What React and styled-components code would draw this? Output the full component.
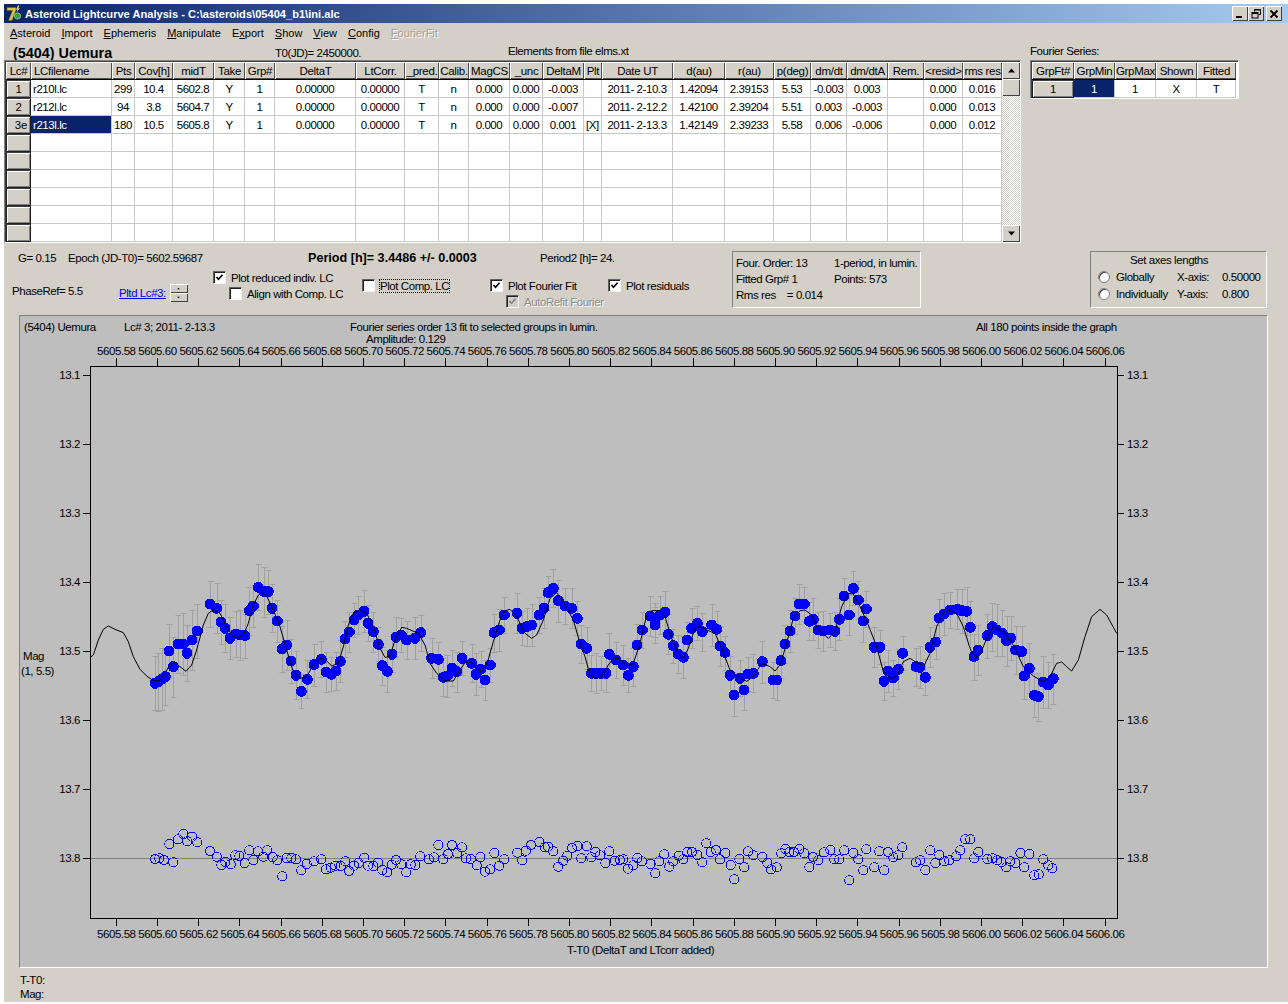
import styled, { createGlobalStyle } from "styled-components"

const FONT = `"Liberation Sans", Arial, sans-serif`
const TEXT_SIZE = 11.5
const TEXT_SPACING = -0.43

const GlobalStyle = createGlobalStyle`
    html, body {
        margin: 0;
        padding: 0;
        background: #fff;
    }
    body {
        font-family: ${FONT};
        font-size: ${TEXT_SIZE}px;
        letter-spacing: ${TEXT_SPACING}px;
        color: #000;
    }
`

const Window = styled.div`
    width: 1284px;
    height: 998px;
    margin: 4px 0 0 4px;
    background: #d4d0c8;
    display: flex;
    flex-direction: column;
    overflow: hidden;
`

const TitleBar = styled.div`
    height: 19px;
    flex: none;
    display: flex;
    align-items: center;
    padding: 0 6px 0 2px;
    gap: 3px;
    background: linear-gradient(90deg, #0a246a, #a6caf0);
    color: #fff;
    font-weight: bold;
    font-size: 11.1px;
    letter-spacing: 0;
`

const TitleText = styled.span`
    flex: 1;
`

const CaptionButtons = styled.div`
    display: flex;
`

const CaptionButton = styled.div`
    width: 16px;
    height: 15px;
    margin-left: ${p => p.$gap || 0}px;
    background: #d4d0c8;
    box-shadow: inset 1px 1px #fff, inset -1px -1px #404040;
    display: flex;
    align-items: center;
    justify-content: center;
`

const MenuBar = styled.div`
    height: 20px;
    flex: none;
    display: flex;
    align-items: center;
    padding-left: 6px;
    box-sizing: border-box;
    gap: 11px;
    font-size: 11px;
    letter-spacing: 0;
`

const MenuItem = styled.span`
    color: ${p => (p.$off ? "#a09d96" : "#000")};
    text-shadow: ${p => (p.$off ? "1px 1px #fff" : "none")};
    u {
        text-decoration: underline;
    }
`

const InfoRow = styled.div`
    height: 19px;
    flex: none;
    display: flex;
    align-items: center;
    padding-left: 9px;
`

const InfoCell = styled.div`
    width: ${p => p.$w}px;
    flex: none;
    font-size: ${p => p.$size || TEXT_SIZE}px;
    font-weight: ${p => (p.$bold ? "bold" : "normal")};
    letter-spacing: ${p => (p.$bold ? 0 : TEXT_SPACING)}px;
    padding-bottom: ${p => p.$lift || 0}px;
`

const TopSection = styled.div`
    flex: none;
    display: flex;
    height: 183px;
    margin-top: -2px;
`

const GridFrame = styled.div`
    width: 1017px;
    height: 183px;
    flex: none;
    display: flex;
    background: #fff;
    border: 1px solid;
    border-color: #808080 #fff #fff #808080;
    box-sizing: border-box;
    box-shadow: inset 1px 1px #404040;
    padding: 1px 0 0 1px;
`

const Table = styled.div`
    display: grid;
    grid-template-columns: ${p => p.$cols};
    grid-auto-rows: 18px;
    align-content: start;
`

const HeadCell = styled.div`
    background: #d4d0c8;
    box-sizing: border-box;
    border-bottom: 1px solid #000;
    box-shadow: inset 1px 1px #fff, inset -1px -1px #505050;
    display: flex;
    align-items: center;
    justify-content: ${p => (p.$left ? "flex-start" : "center")};
    padding-left: ${p => (p.$left ? 3 : 0)}px;
    white-space: nowrap;
    overflow: hidden;
    letter-spacing: -0.3px;
`

const Cell = styled.div`
    background: ${p => (p.$selected ? "#0a246a" : "#fff")};
    color: ${p => (p.$selected ? "#fff" : "#000")};
    border-right: 1px solid #c8c8c8;
    border-bottom: 1px solid #c8c8c8;
    box-sizing: border-box;
    display: flex;
    align-items: center;
    justify-content: ${p => (p.$left ? "flex-start" : "center")};
    padding-left: ${p => (p.$left ? 2 : 0)}px;
    white-space: nowrap;
    overflow: hidden;
`

const RowHead = styled(HeadCell)`
    justify-content: ${p => (p.$right ? "flex-end" : "center")};
    padding-right: ${p => (p.$right ? 3 : 0)}px;
    border: 1px solid #202020;
    border-top-color: #404040;
    box-shadow: inset 1px 1px #fff, inset -1px -1px #808080;
`

const ScrollBar = styled.div`
    width: 18px;
    flex: none;
    display: flex;
    flex-direction: column;
    background: repeating-conic-gradient(#fff 0 25%, #d4d0c8 0 50%) 0 0 / 2px 2px;
`

const ScrollArrow = styled.div`
    width: 18px;
    height: 17px;
    background: #d4d0c8;
    box-shadow: inset 1px 1px #fff, inset -1px -1px #404040;
    display: flex;
    align-items: center;
    justify-content: center;
    margin-top: ${p => (p.$push ? "auto" : 0)};
`

const ScrollThumb = styled(ScrollArrow)`
    height: 17px;
`

const FourierSide = styled.div`
    margin-left: 9px;
    margin-top: -15px;
`

const FourierCaption = styled.div`
    height: 15px;
`

const FourierFrame = styled.div`
    width: 206px;
    border: 1px solid;
    border-color: #808080 #fff #fff #808080;
    background: #fff;
    padding: 1px 0 0 1px;
    box-shadow: inset 1px 1px #404040;
`

const ControlBand = styled.div`
    height: 72px;
    flex: none;
    display: flex;
    padding-top: 8px;
    box-sizing: border-box;
`

const ControlMain = styled.div`
    width: 728px;
    flex: none;
    display: flex;
    flex-direction: column;
`

const PeriodRow = styled.div`
    display: flex;
    height: 14px;
    padding-left: 14px;
    align-items: center;
`

const Label = styled.div`
    width: ${p => (p.$w ? p.$w + "px" : "auto")};
    flex: none;
    font-size: ${p => p.$size || TEXT_SIZE}px;
    font-weight: ${p => (p.$bold ? "bold" : "normal")};
    letter-spacing: ${p => (p.$bold ? 0 : TEXT_SPACING)}px;
    white-space: nowrap;
`

const OptionsRow = styled.div`
    display: flex;
    margin-top: 6px;
`

const OptionColumn = styled.div`
    width: ${p => p.$w}px;
    flex: none;
    display: flex;
    flex-direction: column;
    gap: ${p => p.$gap ?? 3}px;
    padding-top: ${p => p.$top || 0}px;
    padding-left: ${p => p.$left || 0}px;
    box-sizing: border-box;
`

const Check = styled.label`
    display: flex;
    align-items: center;
    gap: 5px;
    height: 13px;
    margin-left: ${p => p.$indent || 0}px;
    color: ${p => (p.$dim ? "#8c8a84" : "#000")};
    text-shadow: ${p => (p.$dim ? "1px 1px #fff" : "none")};
    white-space: nowrap;
`

const Box = styled.span`
    width: 13px;
    height: 13px;
    box-sizing: border-box;
    flex: none;
    background: ${p => (p.$dim ? "#d4d0c8" : "#fff")};
    border: 1px solid;
    border-color: #606060 #f4f4f4 #f4f4f4 #606060;
    box-shadow: inset 1px 1px #202020;
    display: flex;
    align-items: center;
    justify-content: center;
`

const Focused = styled.span`
    outline: 1px dotted #000;
`

const SpinRow = styled.div`
    display: flex;
    align-items: center;
`

const LcLink = styled.span`
    color: #0000ee;
    text-decoration: underline;
    margin-right: 4px;
`

const Spinner = styled.div`
    display: flex;
    flex-direction: column;
    width: 18px;
`

const SpinButton = styled.div`
    height: 9px;
    background: #d4d0c8;
    box-shadow: inset 1px 1px #fff, inset -1px -1px #404040;
    display: flex;
    align-items: center;
    justify-content: center;
`

const GroupBox = styled.div`
    width: ${p => p.$w}px;
    height: 57px;
    flex: none;
    margin-left: ${p => p.$gap}px;
    box-sizing: border-box;
    border: 1px solid;
    border-color: #808080 #fff #fff #808080;
    padding: ${p => p.$pad};
    display: grid;
    grid-template-columns: ${p => p.$cols};
    grid-template-rows: ${p => p.$rows};
    align-items: center;
    white-space: nowrap;
`

const BoxTitle = styled.div`
    grid-column: 1 / -1;
    padding-left: 32px;
    margin-top: -1px;
`

const Radio = styled.span`
    width: 12px;
    height: 12px;
    box-sizing: border-box;
    display: inline-block;
    border-radius: 50%;
    background: #fff;
    border: 1px solid #808080;
    box-shadow: inset 1px 1px #404040;
    margin-right: 6px;
    vertical-align: -2px;
`

const PlotPanel = styled.div`
    width: 1249px;
    height: 653px;
    flex: none;
    margin-left: 15px;
    box-sizing: border-box;
    background: #bebebe;
    border: 1px solid;
    border-color: #808080 #fff #fff #808080;
`

const StatusArea = styled.div`
    flex: 1;
    padding: 5px 0 0 16px;
    line-height: 14px;
`

const colDefs = [
    ["Lc#", 25], ["LCfilename", 81], ["Pts", 23], ["Cov[h]", 38], ["midT", 41], ["Take", 31], ["Grp#", 30],
    ["DeltaT", 81], ["LtCorr.", 49], ["_pred.", 34], ["Calib.", 30], ["MagCS", 41], ["_unc", 33], ["DeltaM", 41],
    ["Plt", 18], ["Date UT", 71], ["d(au)", 52], ["r(au)", 49], ["p(deg)", 37], ["dm/dt", 36], ["dm/dtA", 41],
    ["Rem.", 36], ["<resid>", 39], ["rms res", 39],
]

const rows = [
    ["1", "r210l.lc", "299", "10.4", "5602.8", "Y", "1", "0.00000", "0.00000", "T", "n", "0.000", "0.000", "-0.003", "", "2011- 2-10.3", "1.42094", "2.39153", "5.53", "-0.003", "0.003", "", "0.000", "0.016"],
    ["2", "r212l.lc", "94", "3.8", "5604.7", "Y", "1", "0.00000", "0.00000", "T", "n", "0.000", "0.000", "-0.007", "", "2011- 2-12.2", "1.42100", "2.39204", "5.51", "0.003", "-0.003", "", "0.000", "0.013"],
    ["3e", "r213l.lc", "180", "10.5", "5605.8", "Y", "1", "0.00000", "0.00000", "T", "n", "0.000", "0.000", "0.001", "[X]", "2011- 2-13.3", "1.42149", "2.39233", "5.58", "0.006", "-0.006", "", "0.000", "0.012"],
]
const emptyRows = Array.from({ length: 6 })

// pixel samples read off the reference, [x, y] in screen coordinates
const zoomed = (ox, oy, list) => list.map(([x, y]) => [ox + x / 3, oy + y / 3])

const curve = [
    ...zoomed(90, 570, [[0,263],[10,255],[25,210],[40,178],[55,168],[75,178],[100,188],[115,215],[130,260],[150,298],[170,318],[190,332],[210,332],[225,310],[240,283],[255,277],[270,290],[288,304],[305,285],[320,240],[340,165],[355,130],[372,118],[390,130],[410,170],[425,195],[445,205],[460,195],[475,160],[490,105],[505,75],[515,68],[530,78],[550,120],[570,170],[590,240],[610,305],[630,326],[650,320],[670,285],[690,265],[705,268],[725,288],[745,280],[760,230],[775,165],[790,130],[810,120],[830,130],[850,170],[870,235],[885,262],[900,260],[915,210],[935,172],[950,175],[985,190],[1005,225]]),
    ...zoomed(430, 570, [[0,280],[20,310],[45,333],[70,333],[90,300],[105,278],[125,277],[150,303],[170,285],[190,215],[210,150],[225,122],[240,118],[260,140],[285,190],[305,205],[320,195],[340,150],[360,85],[380,68],[400,95],[430,150],[450,220],[465,260],[480,315],[495,325],[515,320],[535,285],[550,265],[565,265],[590,287],[610,280],[630,220],[650,135],[665,122],[690,122],[705,140],[725,205],[745,250],[760,265],[775,235],[795,175],[810,170],[830,180],[855,190],[875,235],[900,300],[925,320],[950,334],[970,320],[995,280]]),
    ...zoomed(770, 570, [[0,290],[15,303],[30,285],[50,220],[70,145],[90,122],[105,120],[125,135],[145,180],[175,205],[195,185],[215,110],[235,70],[250,72],[270,110],[295,165],[320,230],[340,305],[360,325],[380,318],[400,275],[420,265],[440,278],[462,287],[480,250],[500,170],[520,130],[540,120],[560,130],[580,170],[600,235],[615,263],[630,255],[650,205],[670,170],[700,185],[730,225],[760,290],[790,318],[820,335],[840,320],[860,280],[875,276],[890,290],[905,303],[925,270],[945,200],[965,140],[990,118],[1010,135],[1040,190]]),
]

const points = [
    ...zoomed(90, 570, [[195,340],[205,335],[215,328],[226,320],[250,290],[237,243],[264,222],[280,222],[291,250],[306,210],[322,183],[360,102],[380,115],[393,156],[405,175],[420,205],[437,192],[450,195],[465,197],[478,122],[490,108],[505,52],[522,65],[535,65],[546,115],[562,153],[576,237],[590,225],[603,273],[618,316],[634,364],[652,328],[672,284],[694,268],[708,306],[724,313],[738,303],[751,274],[765,207],[778,186],[792,150],[805,135],[822,124],[834,160],[850,185],[865,223],[877,287],[892,304],[906,253],[918,202],[934,195],[950,210],[975,205],[992,188]]),
    ...zoomed(430, 570, [[5,265],[25,268],[40,322],[52,318],[66,295],[80,305],[96,265],[125,280],[138,313],[152,298],[165,330],[181,285],[192,188],[208,180],[223,135],[261,130],[276,175],[290,170],[305,165],[327,135],[342,115],[354,68],[370,55],[385,92],[405,108],[425,115],[442,145],[454,222],[470,235],[484,310],[498,310],[513,310],[528,310],[538,253],[558,270],[580,285],[595,316],[610,290],[621,225],[637,180],[660,138],[675,150],[690,135],[705,127],[675,165],[715,193],[730,227],[745,252],[760,262],[772,210],[785,175],[802,160],[817,185],[845,165],[860,178],[871,228],[885,248],[900,316],[912,375],[930,325],[942,360],[955,312],[970,310],[997,275]]),
    ...zoomed(770, 570, [[10,330],[20,330],[33,272],[45,222],[60,183],[75,138],[88,102],[103,102],[118,154],[130,148],[145,180],[160,183],[180,180],[195,184],[208,148],[222,78],[238,135],[250,55],[265,90],[280,153],[289,117],[312,232],[330,232],[342,334],[355,303],[370,324],[385,298],[398,250],[438,290],[450,292],[466,322],[480,232],[497,216],[507,144],[522,132],[540,120],[562,118],[575,122],[590,124],[601,172],[612,260],[624,240],[652,197],[667,170],[680,180],[697,190],[710,212],[722,204],[737,240],[755,245],[763,318],[778,295],[793,376],[805,380],[820,336],[835,345],[850,326]]),
]

const residuals = [
    ...zoomed(130, 820, [[75,117],[88,115],[102,120],[130,127],[118,72],[144,58],[160,42],[172,64],[186,50],[202,67],[240,93],[260,110],[274,135],[286,126],[302,133],[316,106],[328,108],[344,129],[358,91],[370,120],[384,94],[400,110],[412,91],[428,111],[442,121],[457,169],[470,114],[484,114],[498,118],[514,151],[530,132],[552,124],[574,118],[588,148],[602,143],[616,137],[632,138],[646,124],[657,153],[672,137],[686,129],[703,113],[714,137],[730,138],[744,128],[757,150],[772,157],[785,134],[798,120],[814,133],[829,157],[842,133],[856,135],[871,109],[897,118],[912,112],[925,75],[940,118],[954,102],[966,75],[982,100],[996,82],[1008,115],[1022,117],[1040,136],[1051,111],[1065,155],[1080,148],[1093,99],[1108,137],[1123,118],[1162,98],[1177,121],[1188,92],[1203,75],[1228,66],[1244,82],[1254,80],[1270,94],[1285,140],[1300,122],[1312,107],[1326,84],[1342,78],[1354,115],[1370,79],[1384,112],[1396,96],[1410,106],[1426,129],[1438,94],[1454,122],[1470,120]]),
    ...zoomed(620, 820, [[10,118],[24,146],[40,136],[52,114],[66,124],[91,132],[106,160],[118,124],[133,103],[148,140],[160,124],[176,107],[190,118],[202,96],[216,96],[232,105],[247,127],[259,70],[272,96],[288,90],[300,118],[316,99],[332,135],[343,178],[358,117],[373,142],[384,94],[400,106],[427,111],[442,129],[453,148],[470,142],[484,100],[496,87],[508,96],[522,96],[538,87],[553,100],[568,141],[579,111],[595,121],[612,97],[631,90],[643,118],[658,118],[673,91],[688,181],[700,99],[715,118],[730,151],[739,88],[763,142],[778,94],[793,151],[804,96],[820,112],[835,106],[847,82],[888,127],[901,121],[916,150],[931,91],[946,129],[958,105],[973,124],[988,121],[1009,109],[1021,91],[1036,58],[1051,58],[1063,115],[1075,96],[1102,117],[1117,115],[1132,121],[1144,126],[1159,142],[1171,124],[1186,129],[1201,99],[1213,142],[1228,102],[1243,166],[1256,163],[1270,118],[1285,136],[1297,145]]),
]

function errorSize(x, i) {
    const base = x < 200 ? 29 : x < 300 ? 23 : x < 960 ? 19 : 24
    return base + ((i * 7) % 5) - 2
}

const xLabels = Array.from({ length: 25 }, (_, i) => (5605.58 + i * 0.02).toFixed(2))
const xTick = i => 116.3 + i * 41.2
const yLabels = ["13.1", "13.2", "13.3", "13.4", "13.5", "13.6", "13.7", "13.8"]
const yTick = i => 375 + i * 69

// the plot is drawn in screen coordinates, the svg origin sits at the panel's inner corner
const PX = 20
const PY = 316

function Chart() {
    const txt = { fontFamily: FONT, fontSize: TEXT_SIZE, fill: "#000" }
    return (
        <svg width="1247" height="651" viewBox={`${PX} ${PY} 1247 651`} style={{ display: "block" }}>
            <rect x="90.5" y="366.5" width="1027" height="552" fill="none" stroke="#000" />
            <line x1="91" x2="1117" y1="858.5" y2="858.5" stroke="#808080" />
            {xLabels.map((l, i) => (
                <g key={l}>
                    <line x1={xTick(i)} x2={xTick(i)} y1="358" y2="366" stroke="#000" shapeRendering="crispEdges" />
                    <line x1={xTick(i)} x2={xTick(i)} y1="918" y2="926" stroke="#000" shapeRendering="crispEdges" />
                    <text {...txt} x={xTick(i)} y="355" textAnchor="middle">{l}</text>
                    <text {...txt} x={xTick(i)} y="938" textAnchor="middle">{l}</text>
                </g>
            ))}
            {yLabels.map((l, i) => (
                <g key={l}>
                    <line x1="83" x2="90" y1={yTick(i) + 0.5} y2={yTick(i) + 0.5} stroke="#000" />
                    <line x1="1117" x2="1124" y1={yTick(i) + 0.5} y2={yTick(i) + 0.5} stroke="#000" />
                    <text {...txt} x="80" y={yTick(i) + 4} textAnchor="end">{l}</text>
                    <text {...txt} x="1127" y={yTick(i) + 4}>{l}</text>
                </g>
            ))}
            {points.map(([x, y], i) => {
                const e = errorSize(x, i)
                const cx = Math.round(x) + 0.5
                return (
                    <path
                        key={"e" + i}
                        d={`M${cx} ${Math.round(y - e)}V${Math.round(y + e)}M${cx - 3} ${Math.round(y - e) + 0.5}h6M${cx - 3} ${Math.round(y + e) + 0.5}h6`}
                        stroke="#a0a0a0"
                        fill="none"
                    />
                )
            })}
            {points.map(([x, y], i) => (
                <circle key={"p" + i} cx={x} cy={y} r="5.5" fill="#0000ff" shapeRendering="crispEdges" />
            ))}
            <polyline points={curve.map(p => p.join(",")).join(" ")} fill="none" stroke="#000" strokeWidth="1" />
            {residuals.map(([x, y], i) => (
                <circle key={"r" + i} cx={x} cy={y} r="4.6" fill="none" stroke="#0000ff" strokeWidth="1" shapeRendering="crispEdges" />
            ))}
            <text {...txt} x="24" y="331">(5404) Uemura</text>
            <text {...txt} x="124" y="331">Lc# 3; 2011- 2-13.3</text>
            <text {...txt} x="350" y="331">Fourier series order 13 fit to selected groups in lumin.</text>
            <text {...txt} x="366" y="343">Amplitude: 0.129</text>
            <text {...txt} x="976" y="331">All 180 points inside the graph</text>
            <text {...txt} x="23" y="660">Mag</text>
            <text {...txt} x="21" y="675">(1, 5.5)</text>
            <text {...txt} x="567" y="954">T-T0 (DeltaT and LTcorr added)</text>
        </svg>
    )
}

function AppLogo() {
    return (
        <svg width="16" height="17" viewBox="0 0 16 16">
            <rect width="16" height="16" fill="#0a246a" />
            <path d="M1 2h9v2.5L6 15H2.5L6.5 5H1z" fill="#d8c84a" stroke="#6b5a10" strokeWidth="0.6" />
            <path d="M12 0l1.5 0-1.5 3 2-.5L10.5 7l1-3-1.5.3z" fill="#f6ea3c" />
            <circle cx="11.5" cy="10.5" r="3.2" fill="#3c9a5a" stroke="#c8e0d0" strokeWidth="0.5" />
        </svg>
    )
}

const CheckMark = ({ color = "#000" }) => (
    <svg width="9" height="9" viewBox="0 0 9 9">
        <path d="M1.5 4l2 2.2L7.5 1.8" fill="none" stroke={color} strokeWidth="1.7" />
    </svg>
)

const Triangle = ({ up, size = 7 }) => (
    <svg width={size} height={Math.ceil(size / 2) + 1} viewBox="0 0 7 4">
        <path d={up ? "M3.5 0L7 4H0z" : "M0 0h7L3.5 4z"} fill="#000" />
    </svg>
)

export default function App() {
    const cols = colDefs.map(c => c[1] + "px").join(" ")
    return (
        <>
            <GlobalStyle />
            <Window>
                <TitleBar>
                    <AppLogo />
                    <TitleText>Asteroid Lightcurve Analysis - C:\asteroids\05404_b1\ini.alc</TitleText>
                    <CaptionButtons>
                        <CaptionButton>
                            <svg width="10" height="10"><rect x="1" y="7" width="6" height="2" fill="#000" /></svg>
                        </CaptionButton>
                        <CaptionButton>
                            <svg width="10" height="10" fill="none" stroke="#000">
                                <path d="M3.5 2.5V.5h6v5h-2" />
                                <path d="M3 1h6" strokeWidth="1" />
                                <rect x="1" y="3.5" width="6" height="5.5" />
                                <path d="M1 4.5h6" />
                            </svg>
                        </CaptionButton>
                        <CaptionButton $gap={2}>
                            <svg width="10" height="10" stroke="#000" strokeWidth="1.8">
                                <path d="M1.5 1.5l7 7M8.5 1.5l-7 7" />
                            </svg>
                        </CaptionButton>
                    </CaptionButtons>
                </TitleBar>
                <MenuBar>
                    <MenuItem><u>A</u>steroid</MenuItem>
                    <MenuItem><u>I</u>mport</MenuItem>
                    <MenuItem><u>E</u>phemeris</MenuItem>
                    <MenuItem><u>M</u>anipulate</MenuItem>
                    <MenuItem>E<u>x</u>port</MenuItem>
                    <MenuItem><u>S</u>how</MenuItem>
                    <MenuItem><u>V</u>iew</MenuItem>
                    <MenuItem><u>C</u>onfig</MenuItem>
                    <MenuItem $off><u>F</u>ourierFit</MenuItem>
                </MenuBar>
                <InfoRow>
                    <InfoCell $w={262} $size={14.4} $bold>(5404) Uemura</InfoCell>
                    <InfoCell $w={233}>T0(JD)= 2450000.</InfoCell>
                    <InfoCell $w={200} $lift={3}>Elements from file elms.xt</InfoCell>
                </InfoRow>
                <TopSection>
                    <GridFrame>
                        <Table $cols={cols}>
                            {colDefs.map(([name], i) => (
                                <HeadCell key={name} $left={i === 1}>{name}</HeadCell>
                            ))}
                            {rows.map(row => row.map((value, i) => (
                                i === 0
                                    ? <RowHead key={i} as="div" $right={value === "3e"}>{value}</RowHead>
                                    : <Cell key={row[0] + i} $left={i === 1} $selected={i === 1 && row[0] === "3e"}>{value}</Cell>
                            )))}
                            {emptyRows.map((_, r) => colDefs.map((c, i) => (
                                i === 0
                                    ? <RowHead key={"h" + r} />
                                    : <Cell key={r + "-" + i} />
                            )))}
                        </Table>
                        <ScrollBar>
                            <ScrollArrow><Triangle up /></ScrollArrow>
                            <ScrollThumb />
                            <ScrollArrow $push><Triangle /></ScrollArrow>
                        </ScrollBar>
                    </GridFrame>
                    <FourierSide>
                        <FourierCaption>Fourier Series:</FourierCaption>
                        <FourierFrame>
                            <Table $cols="42px 41px 41px 41px 39px">
                                {["GrpFt#", "GrpMin", "GrpMax", "Shown", "Fitted"].map(h => (
                                    <HeadCell key={h}>{h}</HeadCell>
                                ))}
                                <RowHead>1</RowHead>
                                <Cell $selected>1</Cell>
                                <Cell>1</Cell>
                                <Cell>X</Cell>
                                <Cell>T</Cell>
                            </Table>
                        </FourierFrame>
                    </FourierSide>
                </TopSection>
                <ControlBand>
                    <ControlMain>
                        <PeriodRow>
                            <Label $w={50}>G= 0.15</Label>
                            <Label $w={240}>Epoch (JD-T0)= 5602.59687</Label>
                            <Label $w={232} $size={12.6} $bold>Period [h]= 3.4486 +/- 0.0003</Label>
                            <Label>Period2 [h]= 24.</Label>
                        </PeriodRow>
                        <OptionsRow>
                            <OptionColumn $w={115} $left={8} $top={14}>
                                <Label>PhaseRef= 5.5</Label>
                            </OptionColumn>
                            <OptionColumn $w={94} $top={13}>
                                <SpinRow>
                                    <LcLink>Pltd Lc#3:</LcLink>
                                    <Spinner>
                                        <SpinButton><Triangle up size={3} /></SpinButton>
                                        <SpinButton><Triangle size={3} /></SpinButton>
                                    </Spinner>
                                </SpinRow>
                            </OptionColumn>
                            <OptionColumn $w={149}>
                                <Check><Box><CheckMark /></Box>Plot reduced indiv. LC</Check>
                                <Check $indent={16}><Box />Align with Comp. LC</Check>
                            </OptionColumn>
                            <OptionColumn $w={128} $top={8}>
                                <Check><Box /><Focused>Plot Comp. LC</Focused></Check>
                            </OptionColumn>
                            <OptionColumn $w={118} $top={8}>
                                <Check><Box><CheckMark /></Box>Plot Fourier Fit</Check>
                                <Check $dim $indent={16}><Box $dim><CheckMark color="#808080" /></Box>AutoRefit Fourier</Check>
                            </OptionColumn>
                            <OptionColumn $w={90} $top={8}>
                                <Check><Box><CheckMark /></Box>Plot residuals</Check>
                            </OptionColumn>
                        </OptionsRow>
                    </ControlMain>
                    <GroupBox $w={189} $gap={0} $pad="3px 0 0 3px" $cols="98px 1fr" $rows="16px 16px 16px">
                        <div>Four. Order: 13</div>
                        <div>1-period, in lumin.</div>
                        <div>Fitted Grp# 1</div>
                        <div>Points: 573</div>
                        <div>Rms res&nbsp;&nbsp;&nbsp;&nbsp;= 0.014</div>
                    </GroupBox>
                    <GroupBox $w={177} $gap={169} $pad="0 0 0 7px" $cols="79px 45px 1fr" $rows="16px 17px 17px">
                        <BoxTitle>Set axes lengths</BoxTitle>
                        <div><Radio />Globally</div>
                        <div>X-axis:</div>
                        <div>0.50000</div>
                        <div><Radio />Individually</div>
                        <div>Y-axis:</div>
                        <div>0.800</div>
                    </GroupBox>
                </ControlBand>
                <PlotPanel>
                    <Chart />
                </PlotPanel>
                <StatusArea>
                    <div>T-T0:</div>
                    <div>Mag:</div>
                </StatusArea>
            </Window>
        </>
    )
}
